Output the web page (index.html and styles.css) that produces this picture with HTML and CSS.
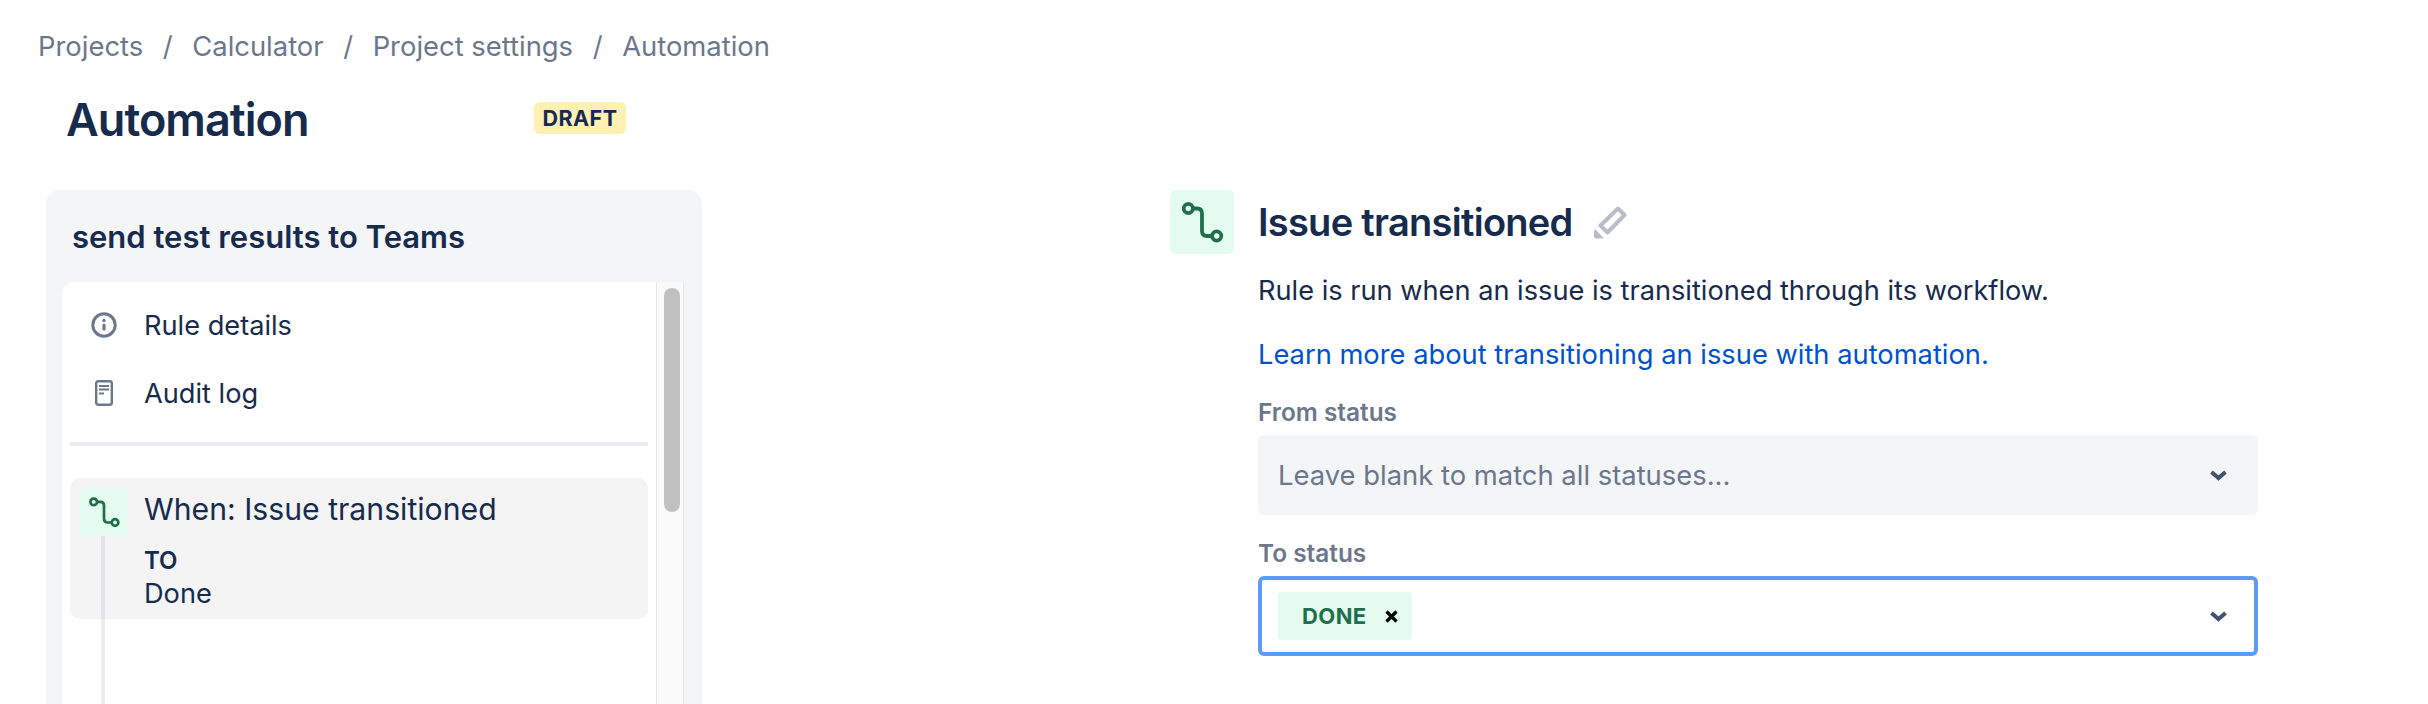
FILE: index.html
```html
<!DOCTYPE html>
<html lang="en">
<head>
  <meta charset="UTF-8">
  <title>Automation</title>
  <link rel="stylesheet" href="styles.css">
</head>
<body>

  <div class="page">
    <nav class="breadcrumbs">
      <a href="#">Projects</a><span class="sep">/</span>
      <a href="#">Calculator</a><span class="sep">/</span>
      <a href="#">Project settings</a><span class="sep">/</span>
      <a href="#">Automation</a>
    </nav>

    <div class="title-row">
      <h1>Automation</h1>
      <span class="draft">DRAFT</span>
    </div>

    <div class="columns">
      <aside class="panel">
        <h2>send test results to Teams</h2>
        <div class="panel-body">
          <div class="rule-list">
            <a class="nav-row" href="#">
              <span class="nav-icon">
                <svg width="26" height="26" viewBox="0 0 26 26">
                  <circle cx="13" cy="13" r="11.2" fill="none" stroke="#6b778c" stroke-width="3"/>
                  <circle cx="13" cy="8.4" r="1.7" fill="#6b778c"/>
                  <rect x="11.4" y="11.6" width="3.2" height="7" rx="1.6" fill="#6b778c"/>
                </svg>
              </span>
              Rule details
            </a>
            <a class="nav-row" href="#">
              <span class="nav-icon">
                <svg width="18" height="26" viewBox="0 0 18 26">
                  <rect x="1.2" y="1.2" width="15.6" height="23.6" rx="2" fill="none" stroke="#6b778c" stroke-width="2.4"/>
                  <path d="M4 6h10M4 9.5h10M4 13.5h5" stroke="#6b778c" stroke-width="2" fill="none"/>
                </svg>
              </span>
              Audit log
            </a>
            <div class="divider"></div>
            <div class="timeline">
              <div class="trigger">
                <span class="tile tile-small">
                  <svg width="48" height="48" viewBox="0 0 64 64">
                    <path d="M23 18.5h4q5 0 5 5V41q0 5 5 5h5" fill="none" stroke="#216e4e" stroke-width="3.6"/>
                    <circle cx="18.3" cy="18.5" r="4.4" fill="none" stroke="#216e4e" stroke-width="3.6"/>
                    <circle cx="46.7" cy="46" r="4.4" fill="none" stroke="#216e4e" stroke-width="3.6"/>
                  </svg>
                </span>
                <div class="trigger-text">
                  <div class="trigger-name">When: Issue transitioned</div>
                  <div class="trigger-key">TO</div>
                  <div class="trigger-value">Done</div>
                </div>
              </div>
              <div class="line"></div>
            </div>
          </div>
          <div class="scroll-track"><div class="scroll-thumb"></div></div>
        </div>
      </aside>

      <section class="detail">
        <span class="tile tile-large">
          <svg width="64" height="64" viewBox="0 0 64 64">
            <path d="M23 18.5h4q5 0 5 5V41q0 5 5 5h5" fill="none" stroke="#216e4e" stroke-width="3.8"/>
            <circle cx="18.3" cy="18.5" r="4.6" fill="none" stroke="#216e4e" stroke-width="3.8"/>
            <circle cx="46.7" cy="46" r="4.6" fill="none" stroke="#216e4e" stroke-width="3.8"/>
          </svg>
        </span>
        <div class="detail-body">
          <div class="detail-head">
            <h3>Issue transitioned</h3>
            <svg class="pencil" width="33" height="33" viewBox="0 0 33 33">
              <path d="M6.500 19.500 24 2.500 30.500 9 13.500 26.500Z" fill="none" stroke="#b8bdc9" stroke-width="4" stroke-linejoin="round"/>
              <path d="M1 23 10 32.500H2Q0 32.500 0 30.500V25Z" fill="#b8bdc9"/>
            </svg>
          </div>
          <p class="desc">Rule is run when an issue is transitioned through its workflow.</p>
          <a class="learn" href="#">Learn more about transitioning an issue with automation.</a>

          <label class="field-label">From status</label>
          <div class="select select-empty">
            <span class="placeholder">Leave blank to match all statuses...</span>
            <svg class="chevron" width="17" height="11" viewBox="0 0 17 11"><path d="M1.500 2 8.500 8l7-6" fill="none" stroke="#42526e" stroke-width="4"/></svg>
          </div>

          <label class="field-label field-label-to">To status</label>
          <div class="select select-focus">
            <span class="tag">DONE
              <svg width="13" height="13" viewBox="0 0 13 13"><path d="M1.500 1.500l10 10M11.500 1.500l-10 10" stroke="#000" stroke-width="3.2"/></svg>
            </span>
            <svg class="chevron" width="17" height="11" viewBox="0 0 17 11"><path d="M1.500 2 8.500 8l7-6" fill="none" stroke="#42526e" stroke-width="4"/></svg>
          </div>
        </div>
      </section>
    </div>
  </div>

</body>
</html>
```

FILE: styles.css
```css
* {
  box-sizing: border-box;
}

body {
  margin: 0;
  background: #fff;
  color: #172b4d;
  font-family: Inter, 'Noto Sans', sans-serif;
}

.page {
  height: 704px;
  overflow: hidden;
}

a {
  text-decoration: none;
}

/* breadcrumbs */
.breadcrumbs {
  display: flex;
  align-items: center;
  height: 46px;
  margin-top: 23px;
  padding-left: 38px;
  font-size: 27.4px;
  line-height: 46px;
  color: #6b778c;
}

.breadcrumbs a {
  color: #6b778c;
}

.sep {
  margin: 0 19.6px;
}

/* title */
.title-row {
  display: flex;
  align-items: center;
  height: 76px;
  margin-top: 12px;
  padding-left: 66px;
}

h1 {
  width: 468px;
  margin: 0;
  font-size: 45px;
  font-weight: 590;
  letter-spacing: -0.95px;
}

.draft {
  width: 92px;
  height: 32px;
  margin-top: -3px;
  border-radius: 6px;
  background: #fff0b3;
  font-size: 21.5px;
  font-weight: 700;
  line-height: 32px;
  text-align: center;
  letter-spacing: 0.5px;
}

.columns {
  display: flex;
  margin-top: 33px;
  padding-left: 46px;
}

/* left panel */
.panel {
  width: 656px;
  height: 600px;
  padding: 0 18px 0 16px;
  border-radius: 14px;
  background: #f4f5f7;
}

h2 {
  height: 92px;
  margin: 0;
  padding-left: 10px;
  font-size: 31px;
  font-weight: 600;
  line-height: 94px;
}

.panel-body {
  display: flex;
  height: 500px;
  border-radius: 12px 12px 0 0;
  background: #fff;
}

.rule-list {
  width: 594px;
  padding: 9px 8px 0;
}

.nav-row {
  display: flex;
  align-items: center;
  height: 68px;
  color: #172b4d;
  font-size: 27.2px;
}

.nav-icon {
  display: flex;
  justify-content: center;
  width: 68px;
  margin-right: 6px;
}

.divider {
  height: 4px;
  margin-top: 15px;
  background: #ebecf0;
}

.timeline {
  position: relative;
  margin-top: 32px;
}

.trigger {
  display: flex;
  gap: 16px;
  height: 141px;
  padding: 10px 0 0 10px;
  border-radius: 10px;
  background: #f4f4f4;
}

.tile {
  display: block;
  flex: none;
  background: #e3fcef;
}

.tile svg {
  display: block;
}

.tile-small {
  width: 48px;
  height: 48px;
  border-radius: 6px;
}

.trigger-name {
  font-size: 30.2px;
  line-height: 42px;
}

.trigger-key {
  margin-top: 14px;
  font-size: 24px;
  font-weight: 600;
  line-height: 33px;
}

.trigger-value {
  font-size: 27.2px;
  line-height: 33px;
}

.line {
  position: absolute;
  top: 58px;
  left: 31px;
  width: 4px;
  height: 200px;
  background: rgba(9, 30, 66, 0.08);
}

.scroll-track {
  width: 28px;
  padding: 6px 4px 0 7px;
  border-left: 1px solid #e6e6e6;
  border-right: 1px solid #e6e6e6;
  background: #fafafa;
}

.scroll-thumb {
  width: 16px;
  height: 224px;
  border-radius: 8px;
  background: #c1c1c1;
}

/* right side */
.detail {
  display: flex;
  gap: 24px;
  margin-left: 468px;
}

.tile-large {
  width: 64px;
  height: 64px;
  border-radius: 6px;
}

.detail-body {
  width: 1000px;
}

.detail-head {
  display: flex;
  align-items: center;
  height: 64px;
}

h3 {
  margin: 0 21px 0 0;
  font-size: 38px;
  font-weight: 580;
  letter-spacing: -0.72px;
}

.desc {
  margin: 16px 0 0;
  font-size: 27.2px;
  line-height: 42px;
}

.learn {
  display: block;
  margin-top: 22px;
  color: #0052cc;
  font-size: 27.3px;
  line-height: 42px;
}

.field-label {
  display: block;
  margin-top: 20px;
  color: #6b778c;
  font-size: 24.4px;
  font-weight: 600;
  line-height: 32px;
}

.field-label-to {
  margin-top: 22px;
}

.select {
  display: flex;
  align-items: center;
  justify-content: space-between;
  height: 80px;
  margin-top: 7px;
  padding-right: 31px;
  border-radius: 6px;
}

.select-empty {
  padding-left: 20px;
  background: #f4f5f7;
}

.placeholder {
  color: #6b778c;
  font-size: 27.4px;
}

.select-focus {
  padding-left: 16px;
  border: 4px solid #5e9bf9;
  padding-right: 27px;
}

.tag {
  display: flex;
  align-items: center;
  gap: 18px;
  height: 48px;
  padding: 0 14px 0 24px;
  border-radius: 4px;
  background: #e3fcef;
  color: #216e4e;
  font-size: 22px;
  font-weight: 700;
  letter-spacing: 0.4px;
}
```
